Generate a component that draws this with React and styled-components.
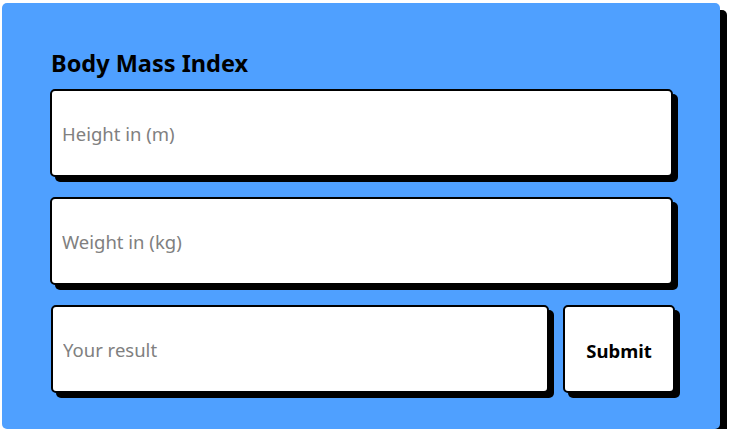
import React from "react";
import styled, { createGlobalStyle } from "styled-components";

const Global = createGlobalStyle`
  html, body { margin: 0; padding: 0; background: #fff; }
  body { font-family: "Noto Sans", "Open Sans", sans-serif; }
`;

const Card = styled.form`
  box-sizing: border-box;
  margin: 3px 0 0 2px;
  width: 718px;
  height: 426px;
  padding: 38px 47px 0 48px;
  background: #4fa0ff;
  border-radius: 5px;
  box-shadow: 7px 7px 0 #000;
  display: flex;
  flex-direction: column;
`;

const Title = styled.h1`
  margin: 0 0 3px 1px;
  font-size: 23.5px;
  font-weight: 700;
  line-height: 45px;
  color: #000;
`;

const Stack = styled.div`
  display: flex;
  flex-direction: column;
  gap: 20px;
`;

const Row = styled.div`
  display: flex;
  gap: 14px;
`;

const Field = styled.input`
  box-sizing: border-box;
  flex: ${(p) => (p.$grow ? "1" : "none")};
  width: ${(p) => (p.$grow ? "auto" : "100%")};
  min-width: 0;
  height: 88px;
  padding: 0 10px;
  margin-left: ${(p) => (p.$grow ? "1px" : "0")};
  border: 2px solid #000;
  border-radius: 5px;
  box-shadow: 5px 5px 0 #000;
  background: #fff;
  font-family: "Noto Sans", "Open Sans", sans-serif;
  font-size: 18.5px;
  color: #000;
  outline: none;
  &::placeholder { color: #808080; }
`;

const Submit = styled.button`
  box-sizing: border-box;
  flex: none;
  width: 112px;
  height: 88px;
  padding: 2px 0 0;
  border: 2px solid #000;
  border-radius: 5px;
  box-shadow: 5px 5px 0 #000;
  background: #fff;
  font-family: "Noto Sans", "Open Sans", sans-serif;
  font-size: 18.5px;
  font-weight: 700;
  color: #000;
  cursor: pointer;
  margin-right: -2px;
`;

export default function App() {
  return (
    <>
      <Global />
      <Card onSubmit={(e) => e.preventDefault()}>
        <Title>Body Mass Index</Title>
        <Stack>
          <Field placeholder="Height in (m)" />
          <Field placeholder="Weight in (kg)" />
          <Row>
            <Field $grow placeholder="Your result" readOnly />
            <Submit type="submit">Submit</Submit>
          </Row>
        </Stack>
      </Card>
    </>
  );
}
